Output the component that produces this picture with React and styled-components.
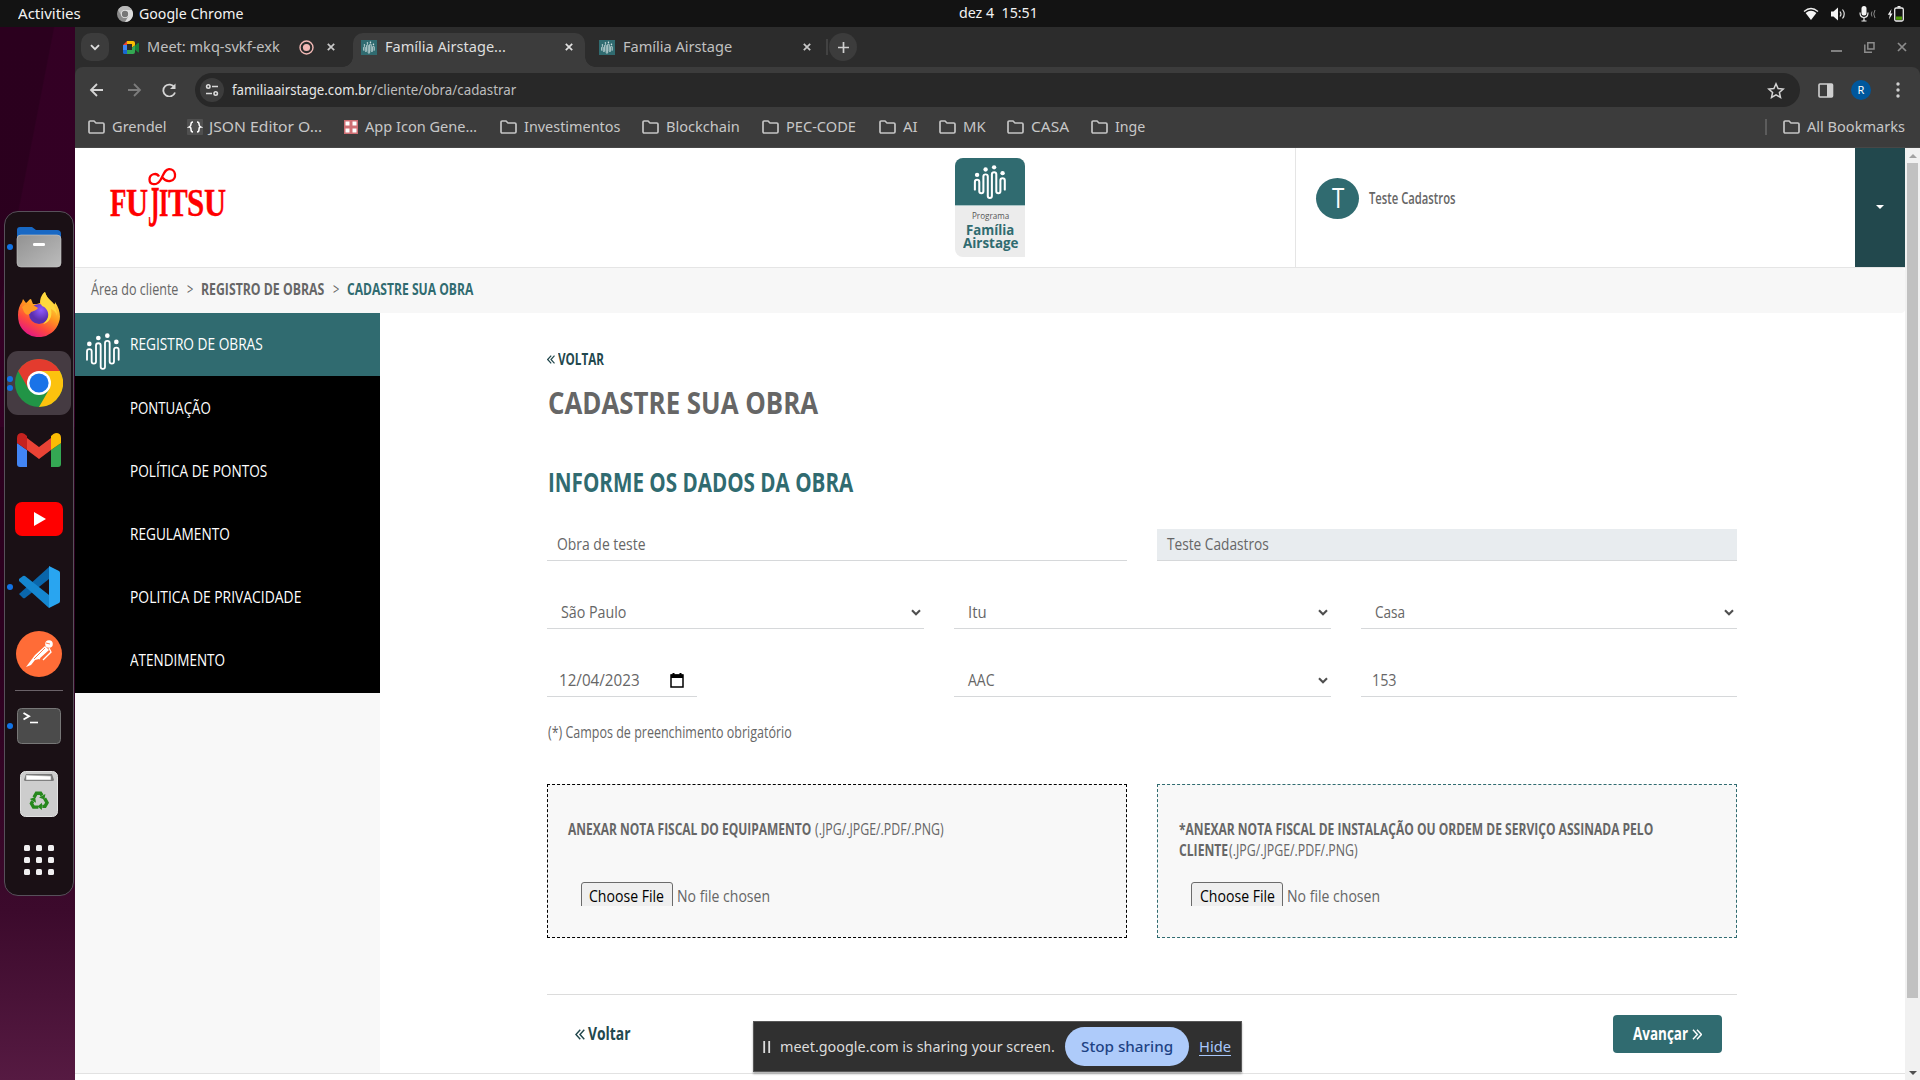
import React, { useLayoutEffect, useRef, useState } from "react";
import styled, { createGlobalStyle } from "styled-components";

const TEAL = "#306b70";
const DARK_TEAL = "#22484d";
const GREY = "#666";

const Global = createGlobalStyle`
  * { box-sizing: border-box; }
  body { margin: 0; background: #131313; overflow: hidden; }
  svg { display: block; flex: none; }
`;

/* ---------- text that condenses to a set width ---------- */
const FitBox = styled.span`
  display: inline-flex;
  flex: none;
  width: ${(p) => p.$w}px;
  margin-left: ${(p) => p.$ml || 0}px;
  white-space: pre;
  font-size: ${(p) => (p.$size ? p.$size + "px" : "inherit")};
  font-weight: ${(p) => p.$weight || "inherit"};
  color: ${(p) => p.$color || "inherit"};
`;
const FitInner = styled.span`
  display: inline-block;
  flex: none;
  transform-origin: 0 50%;
`;
function Fit({ w, ml, size, weight, color, dy = -1, children }) {
  const ref = useRef(null);
  const [s, setS] = useState(1);
  useLayoutEffect(() => {
    const natural = ref.current.offsetWidth;
    if (natural) setS((w + 0.4) / natural);
  }, [w]);
  return (
    <FitBox $w={w} $ml={ml} $size={size} $weight={weight} $color={color}>
      <FitInner ref={ref} style={{ transform: `translateY(${dy}px) scaleX(${s})` }}>{children}</FitInner>
    </FitBox>
  );
}

/* ---------- desktop ---------- */
const Screen = styled.div`
  width: 1920px;
  height: 1080px;
  display: flex;
  flex-direction: column;
  overflow: hidden;
  font-family: "Noto Sans", "Open Sans", sans-serif;
`;
const TopBar = styled.div`
  height: 27px;
  flex: none;
  display: grid;
  grid-template-columns: 959px 1fr auto;
  align-items: center;
  background: #131313;
  color: #f2f2f2;
  font-size: 14.5px;
  line-height: 27px;
`;
const BarGroup = styled.div`
  display: flex;
  align-items: center;
  height: 27px;
  padding-left: ${(p) => p.$pl || 0}px;
  padding-right: ${(p) => p.$pr || 0}px;
  gap: ${(p) => p.$gap || 0}px;
`;
const Desk = styled.div`
  display: flex;
  flex: 1;
  min-height: 0;
`;
const Launcher = styled.div`
  width: 75px;
  flex: none;
  padding: 184px 0 0 4px;
  background: linear-gradient(101deg, transparent 35%, rgba(70, 0, 50, 0.3) 36%) 0 0 / 75px 400px no-repeat,
    linear-gradient(180deg, #2b001e 0%, #2c001f 60%, #3c0a2c 84%, #561a42 100%);
`;
const Dock = styled.div`
  width: 70px;
  height: 685px;
  border: 1px solid #57505a;
  border-radius: 14px;
  background: #1a1015;
  display: flex;
  flex-direction: column;
  align-items: center;
  padding-top: 1px;
`;
const DockItem = styled.div`
  width: 64px;
  height: 64px;
  margin-top: ${(p) => p.$mt ?? 4}px;
  flex: none;
  display: grid;
  grid-template-columns: 6px 52px 6px;
  align-items: center;
  justify-items: center;
  border-radius: 11px;
  background: ${(p) => (p.$on ? "#453b42" : "transparent")};
`;
const Dots = styled.div`
  display: flex;
  flex-direction: column;
  gap: 3px;
`;
const Dot = styled.i`
  width: 6px;
  height: 6px;
  border-radius: 50%;
  background: #1173e6;
`;
const DockRule = styled.div`
  width: 48px;
  height: 1px;
  flex: none;
  background: #6a6268;
  margin-top: 4px;
`;

/* ---------- browser ---------- */
const Browser = styled.div`
  flex: 1;
  min-width: 0;
  display: flex;
  flex-direction: column;
  background: #2c2c2c;
  color: #c7c7c7;
  font-size: 14.5px;
`;
const TabStrip = styled.div`
  height: 40px;
  flex: none;
  display: flex;
  align-items: flex-start;
  padding: 6px 13px 0 6px;
  line-height: 28px;
`;
const RoundButton = styled.div`
  width: 28px;
  height: 28px;
  border-radius: ${(p) => p.$r}px;
  background: #3c3c3c;
  display: flex;
  align-items: center;
  justify-content: center;
`;
const Tab = styled.div`
  width: ${(p) => p.$w}px;
  height: ${(p) => (p.$on ? 34 : 28)}px;
  padding: 0 ${(p) => p.$pr}px ${(p) => (p.$on ? 6 : 0)}px ${(p) => p.$pl}px;
  display: flex;
  align-items: center;
  gap: 8px;
  border-radius: 10px 10px 0 0;
  background: ${(p) => (p.$on ? "#3c3c3c" : "transparent")};
  color: ${(p) => (p.$on ? "#dedede" : "#c0c0c0")};
`;
const TabFoot = styled.div`
  align-self: flex-end;
  width: 10px;
  height: 10px;
  background: radial-gradient(circle at ${(p) => p.$at} 0, #2c2c2c 9.5px, #3c3c3c 10px);
`;
const Spacer = styled.div`
  flex: ${(p) => (p.$w ? "none" : 1)};
  width: ${(p) => (p.$w ? p.$w + "px" : "auto")};
`;
const TabDivider = styled.div`
  width: 2px;
  height: 16px;
  margin: 6px 1px 0 0;
  background: #424242;
`;
const WinControls = styled.div`
  display: flex;
  align-items: center;
  height: 28px;
  gap: 22px;
`;
const Toolbar = styled.div`
  height: 40px;
  flex: none;
  display: flex;
  align-items: center;
  padding: 6px 12px 0 14px;
  border-radius: 8px 8px 0 0;
  background: #3c3c3c;
`;
const NavButtons = styled.div`
  display: flex;
  width: 106px;
  gap: 20.5px;
`;
const Omnibox = styled.div`
  height: 34px;
  width: 1605px;
  border-radius: 17px;
  background: #282828;
  display: flex;
  align-items: center;
  padding: 0 15px 0 5px;
  color: #e6e6e6;
`;
const ToolIcons = styled.div`
  flex: 1;
  display: flex;
  align-items: center;
  padding-left: 18px;
  justify-content: space-between;
`;
const Profile = styled.div`
  width: 20px;
  height: 20px;
  border-radius: 50%;
  background: #00579c;
  color: #fff;
  font-size: 11px;
  line-height: 20px;
  text-align: center;
`;
const Bookmarks = styled.div`
  height: 41px;
  flex: none;
  display: flex;
  align-items: center;
  padding: 0 15px 0 13px;
  background: #3c3c3c;
  border-bottom: 1px solid #474747;
`;
const Bookmark = styled.div`
  display: flex;
  align-items: center;
  gap: ${(p) => p.$gap ?? 7}px;
  margin-right: ${(p) => p.$mr ?? 21}px;
`;
const BookmarkRule = styled.div`
  width: 2px;
  height: 16px;
  background: #5c5c5c;
  margin-right: 16px;
`;

/* ---------- page ---------- */
const Viewport = styled.div`
  flex: 1;
  min-height: 0;
  display: flex;
  background: #fff;
  color: ${GREY};
  font-family: "Open Sans", "Noto Sans", sans-serif;
`;
const Page = styled.div`
  width: 1830px;
  display: flex;
  flex-direction: column;
`;
const Scrollbar = styled.div`
  width: 15px;
  height: 932px;
  background: #f1f1f1;
  display: flex;
  flex-direction: column;
  align-items: center;
  justify-content: space-between;
  padding: 6px 0 5px;
`;
const Thumb = styled.div`
  width: 11px;
  height: 835px;
  margin: 5px 0 auto;
  background: #c1c1c1;
`;
const Header = styled.header`
  height: 120px;
  flex: none;
  display: grid;
  grid-template-columns: 880px 340px 1fr 50px;
  border-bottom: 1px solid #e5e5e5;
`;
const Brand = styled.div`
  padding: 17px 0 0 33px;
`;
const Program = styled.div`
  width: 70px;
  height: 99px;
  margin-top: 10px;
  border-radius: 8px 8px 0 8px;
  overflow: hidden;
  background: #ececec;
  display: flex;
  flex-direction: column;
  align-items: center;
  color: ${TEAL};
`;
const ProgramTop = styled.div`
  width: 70px;
  height: 48px;
  padding: 6px 0 0 18px;
  background: ${TEAL};
  border-bottom: 1px solid #a9c4c6;
  margin-bottom: 4px;
`;
const ProgramLine = styled.div`
  height: ${(p) => p.$h}px;
  line-height: ${(p) => p.$h}px;
  display: flex;
`;
const User = styled.div`
  border-left: 1px solid #e5e5e5;
  display: flex;
  align-items: flex-start;
  gap: 10px;
  padding: 30px 0 0 20px;
`;
const UserBadge = styled.div`
  width: 43px;
  height: 41px;
  border-radius: 50%;
  background: ${TEAL};
  color: #fff;
  display: flex;
  align-items: center;
  justify-content: center;
  line-height: 40px;
`;
const UserName = styled.div`
  height: 41px;
  display: flex;
  align-items: center;
`;
const UserMenu = styled.div`
  background: ${DARK_TEAL};
  display: flex;
  align-items: center;
  justify-content: center;
  padding-bottom: 1px;
`;
const Crumbs = styled.nav`
  height: 45px;
  flex: none;
  display: flex;
  align-items: center;
  gap: 8.5px;
  padding: 0 0 1px 16px;
  border-radius: 4px;
  background: #f7f7f7;
  font-size: 15.5px;
`;
const Columns = styled.div`
  height: 761px;
  flex: none;
  display: flex;
  border-bottom: 1px solid #e2e2e2;
`;
const Sidebar = styled.aside`
  width: 305px;
  background: #f8f8f8;
`;
const Menu = styled.div`
  height: 380px;
  background: #000;
`;
const MenuItem = styled.div`
  height: 63px;
  display: flex;
  align-items: center;
  padding-left: ${(p) => (p.$on ? 10 : 55)}px;
  color: #fff;
  font-size: 17px;
  background: ${(p) => (p.$on ? TEAL : "#000")};
`;
const MenuIcon = styled.span`
  width: 45px;
  padding-top: 14px;
`;
const Main = styled.main`
  width: 1357px;
  padding: 35px 0 0 167px;
`;
const Line = styled.div`
  height: ${(p) => p.$h}px;
  margin-top: ${(p) => p.$mt || 0}px;
  display: flex;
  align-items: center;
  gap: ${(p) => p.$gap || 0}px;
  line-height: ${(p) => p.$h}px;
  color: ${(p) => p.$color || GREY};
`;
const Row = styled.div`
  display: grid;
  grid-template-columns: ${(p) => p.$cols};
  gap: 30px;
  margin-top: ${(p) => p.$mt}px;
`;
const Field = styled.div`
  height: 32px;
  width: ${(p) => (p.$w ? p.$w + "px" : "auto")};
  display: flex;
  align-items: center;
  justify-content: space-between;
  padding: 0 ${(p) => p.$pr || 3}px 1px ${(p) => p.$pl}px;
  border-bottom: 1px solid #d6d8da;
  background: ${(p) => (p.$off ? "#e8ecef" : "#fff")};
  font-size: 17px;
`;
const Upload = styled.div`
  height: 154px;
  border: 1px dashed ${(p) => p.$edge};
  background: #f8f8f8;
  padding: 35px 0 0 ${(p) => p.$pl}px;
`;
const UploadTitle = styled.div`
  height: 62px;
  font-size: 15.5px;
  line-height: 21px;
`;
const TitleLine = styled.div`
  display: flex;
  height: 21px;
`;
const FilePick = styled.div`
  height: 24px;
  overflow: hidden;
  display: flex;
  gap: 4px;
  padding-left: 12.5px;
  font-size: 17px;
  line-height: 27px;
`;
const FileButton = styled.div`
  width: 92px;
  height: 32px;
  padding-left: 7.5px;
  border: 1px solid #6b6b6b;
  border-radius: 3px;
  background: #efefef;
  color: #000;
  line-height: 26px;
`;
const Footer = styled.div`
  margin-top: 56px;
  border-top: 1px solid #dcdcdc;
  height: 80px;
  display: flex;
  justify-content: space-between;
  align-items: flex-start;
  padding: 20px 15px 0 28px;
`;
const BackLink = styled.div`
  height: 38px;
  display: flex;
  align-items: center;
  gap: 3px;
  color: ${DARK_TEAL};
`;
const Next = styled.div`
  width: 109px;
  height: 38px;
  border-radius: 4px;
  background: ${TEAL};
  color: #fff;
  display: flex;
  align-items: center;
  gap: 4px;
  padding-left: 20px;
`;

/* ---------- screen share notice ---------- */
const ShareBar = styled.div`
  position: absolute;
  left: 753px;
  top: 1021px;
  width: 489px;
  height: 51px;
  display: flex;
  align-items: center;
  padding-left: 9px;
  background: #303030;
  border: 1px solid #585858;
  box-shadow: 0 2px 2px rgba(0, 0, 0, 0.3);
  color: #dcdcdc;
  font-size: 14.5px;
`;
const StopButton = styled.div`
  width: 124px;
  height: 39px;
  margin: 0 10px;
  border-radius: 20px;
  background: #aecbfa;
  color: #1d4284;
  display: flex;
  align-items: center;
  justify-content: center;
`;
const Hide = styled.span`
  color: #a8c7fa;
  border-bottom: 1.5px solid #a8c7fa;
  line-height: 17px;
  display: flex;
`;

/* ---------- drawings ---------- */
const Wave = ({ w, h, sw = 5.5, c = "#fff" }) => (
  <svg width={w} height={h} viewBox="0 0 108 118" preserveAspectRatio="none">
    <g fill={c}>
      <circle cx="13" cy="36" r="7" /><circle cx="40" cy="18" r="7" />
      <circle cx="67" cy="11" r="7" /><circle cx="94" cy="30" r="7" />
    </g>
    <path fill="none" stroke={c} strokeWidth={sw} strokeLinecap="round"
      d="M6 84V59a7 7 0 0 1 14 0V89a6.5 6.5 0 0 0 13 0V41a7 7 0 0 1 14 0V105a6.5 6.5 0 0 0 13 0V34a7 7 0 0 1 14 0V89a6.5 6.5 0 0 0 13 0V54a7 7 0 0 1 14 0V84" />
  </svg>
);
const FaviconTile = styled.span`
  width: 16px;
  height: 15px;
  flex: none;
  display: flex;
  align-items: center;
  justify-content: center;
  background: ${TEAL};
`;
const Favicon = () => <FaviconTile><Wave w={12} h={13} sw={7} c="#e4eeee" /></FaviconTile>;
const Cross = ({ s = 8, c = "#c8c8c8", sw = 1.7 }) => (
  <svg width={s} height={s} viewBox="0 0 8 8"><path d="M.8.8l6.4 6.4M7.2.8L.8 7.2" stroke={c} strokeWidth={sw} /></svg>
);
const Folder = () => (
  <svg width="17" height="14" viewBox="0 0 17 14">
    <path d="M1 2.2Q1 1 2.2 1H6l2 2h6.8Q16 3 16 4.2v7.6q0 1.2-1.2 1.2H2.2Q1 13 1 11.8z" fill="none" stroke="#c4c4c4" strokeWidth="1.7" />
  </svg>
);
const Chevrons = ({ right, s = 8 }) => (
  <svg width={s} height={s + 1} viewBox="0 0 8 9">
    <path d={right ? "M.7.7l3.6 3.8L.7 8.3M4 .7l3.6 3.8L4 8.3" : "M4.200 .7L.7 4.5 4.200 8.3M7.500.7L4 4.5l3.5 3.8"} fill="none" stroke="currentColor" strokeWidth="1.2" />
  </svg>
);
const SelectArrow = () => (
  <svg width="10" height="7" viewBox="0 0 10 7"><path d="M1 1.2l4 4 4-4" fill="none" stroke="#4f4f4f" strokeWidth="2.1" /></svg>
);
const Calendar = () => (
  <svg width="14" height="15" viewBox="0 0 14 15">
    <path d="M1 2h12v12H1z" fill="none" stroke="#000" strokeWidth="1.5" /><path d="M1 1.5h12V5H1zM2.5 0h2v2h-2zM9.5 0h2v2h-2z" />
  </svg>
);
const LogoBox = styled.div`
  display: grid;
  justify-items: start;
  width: 122px;
`;
const LogoWord = styled.div`
  height: 34px;
  display: flex;
  padding-left: 2px;
  color: #f00;
  font-family: "Liberation Serif", "Times New Roman", serif;
  font-size: 41px;
  font-weight: 700;
  line-height: 34px;
  -webkit-text-stroke: 0.4px #f00;
`;
const Fujitsu = () => (
  <LogoBox>
    <svg width="122" height="21" viewBox="108 165 122 21">
      <path d="M159 176.500c-2.500-4.500-9.500-2.500-9.500 3 0 6 7.500 6.300 11 .5s4-10.500 8.500-10.800c7-.4 8.500 10 1.500 11.700-3.500.8-6.500-1.300-8.500-3.600" fill="none" stroke="#f00" strokeWidth="2.300" />
    </svg>
    <LogoWord>
      <Fit w={16} dy={-1}>F</Fit>
      <Fit w={22} dy={-1}>U</Fit>
      <Fit w={11} size={56} dy={3.500}>J</Fit>
      <Fit w={9} dy={-1}>I</Fit>
      <Fit w={19} dy={-1}>T</Fit>
      <Fit w={17} dy={-1}>S</Fit>
      <Fit w={22} dy={-1}>U</Fit>
    </LogoWord>
  </LogoBox>
);
const Chrome = ({ s, grey }) => {
  const [r, g, y, b] = grey ? ["#b8b8b8", "#8a8a8a", "#dcdcdc", "#777"] : ["#e33b2e", "#219446", "#fcc20e", "#1a73e8"];
  return (
    <svg width={s} height={s} viewBox="0 0 48 48">
      <circle cx="24" cy="24" r="24" fill={g} />
      <path d="M24 12h20.800A24 24 0 0 1 24 48L34.400 30z" fill={y} />
      <path d="M3.200 12A24 24 0 0 1 44.800 12H24L13.600 30z" fill={r} />
      <circle cx="24" cy="24" r="12" fill={grey ? "#e8e8e8" : "#fff"} />
      <circle cx="24" cy="24" r="9.600" fill={b} />
    </svg>
  );
};
const FilesIcon = () => (
  <svg width="46" height="42" viewBox="0 0 46 42">
    <path d="M1 8V4q0-3 3-3h12l4 3h21q4 0 4 4v6H1z" fill="#1868c4" />
    <defs><linearGradient id="fg" x2="1" y2="1"><stop stopColor="#929292" /><stop offset="1" stopColor="#bcbcbc" /></linearGradient></defs>
    <rect x="1" y="9" width="44" height="32" rx="4" fill="url(#fg)" stroke="#c8c8c8" strokeWidth=".6" />
    <rect x="17" y="17" width="12" height="3" rx="1.300" fill="#fff" />
  </svg>
);
const FirefoxIcon = () => (
  <svg width="44" height="46" viewBox="0 0 44 46">
    <defs>
      <linearGradient id="ff" x1=".8" y1=".1" x2=".3" y2="1"><stop stopColor="#ffe94a" /><stop offset=".4" stopColor="#ff9a1f" /><stop offset=".7" stopColor="#ff4a3c" /><stop offset="1" stopColor="#e31587" /></linearGradient>
      <radialGradient id="fp" cx=".6" cy=".3"><stop stopColor="#9059ff" /><stop offset="1" stopColor="#5b2fae" /></radialGradient>
    </defs>
    <path d="M28 1c1 6 6 8 9 12 1 1 1-1 1-2 5 7 6 15 4 20a21 21 0 0 1-40 1C0 24 1 16 5 11l1-3 3 4c2-1 3-4 5-4l2 5c3 0 5 0 7-1 0-5 2-9 5-11z" fill="url(#ff)" />
    <circle cx="22" cy="23" r="10" fill="url(#fp)" />
    <path d="M5 16c5-5 11-2 16 1-2 3-5 3-7 4-2 4-5 3-7 0z" fill="#ff9a25" />
    <path d="M28 1c2 8 12 12 12 24-1-4-3-6-6-7 2 9-3 14-8 15 9-7 5-16-1-18-3-4 0-11 3-14z" fill="#ffd83d" />
  </svg>
);
const GmailIcon = () => (
  <svg width="44" height="34" viewBox="0 0 44 34">
    <path d="M0 10l10 7v17H3q-3 0-3-3z" fill="#4285f4" /><path d="M44 10l-10 7v17h7q3 0 3-3z" fill="#34a853" />
    <path d="M10 5l12 9 12-9v12L22 26 10 17z" fill="#ea4335" />
    <path d="M0 11V5Q0 0 5 0q2 0 5 3v14L0 10z" fill="#c5221f" /><path d="M44 11V5q0-5-5-5-2 0-5 3v14l10-7z" fill="#fbbc04" />
  </svg>
);
const YoutubeIcon = () => (
  <svg width="48" height="34" viewBox="0 0 48 34"><rect width="48" height="34" rx="7" fill="#f00" /><path d="M19 10l12 7-12 7z" fill="#fff" /></svg>
);
const CodeIcon = () => (
  <svg width="42" height="42" viewBox="0 0 42 42">
    <path d="M1 28l4 4q1 .6 2 0L31 13V1L1 28z" fill="#0a66ab" /><path d="M1 13l4-3q1-.6 2 0l24 19v13L1 15z" fill="#1587d0" />
    <path d="M31 0l10 5q1 .5 1 2v28q0 1.500-1 2l-10 5z" fill="#29a5f0" />
  </svg>
);
const PostmanIcon = () => (
  <svg width="46" height="46" viewBox="0 0 46 46">
    <circle cx="23" cy="23" r="23" fill="#ff6c37" />
    <circle cx="33" cy="13" r="3.800" fill="#fff" />
    <path d="M29 15l4 4-10 9-4 1-4 5-5 2 6-8 3-4z" fill="#fff" />
    <path d="M33 17l2 4-8 8M20 26l4 2" stroke="#fff" strokeWidth="1.300" fill="none" />
    <path d="M29 17L18 28M30 12l4 1" stroke="#ff6c37" strokeWidth=".9" />
  </svg>
);
const TerminalIcon = () => (
  <svg width="44" height="36" viewBox="0 0 44 36">
    <rect x=".5" y=".5" width="43" height="35" rx="4" fill="#4b4b4b" stroke="#777" />
    <path d="M6.500 5l5.500 3.300L6.500 11.500" fill="none" stroke="#fff" strokeWidth="1.900" /><path d="M13 14.500h8" stroke="#fff" strokeWidth="1.600" />
  </svg>
);
const TrashIcon = () => (
  <svg width="38" height="46" viewBox="0 0 38 46">
    <rect x=".5" y=".5" width="37" height="45" rx="5" fill="#cdcdcd" stroke="#e2e2e2" />
    <path d="M4 9l2-6h26l2 6q0 1-2 1H6q-2 0-2-1z" fill="#777" /><path d="M6 9V4l25 1v4z" fill="#fff" stroke="#999" strokeWidth=".6" />
    <g transform="translate(19 30)">
      {[0, 120, 240].map((a) => (
        <g key={a} transform={`rotate(${a})`}>
          <path d="M-5-3.600L-2.600-7.800H1.600L3-5.500" fill="none" stroke="#26881c" strokeWidth="3.400" />
          <path d="M6.400-7L5.400-1.400 0-3.500z" fill="#26881c" />
        </g>
      ))}
    </g>
  </svg>
);
const GridIcon = () => (
  <svg width="30" height="30" viewBox="0 0 30 30" fill="#f0eff0">
    {[0, 12, 24].map((y) => [0, 12, 24].map((x) => <rect key={x + "-" + y} x={x} y={y} width="6" height="6" rx="1.500" />))}
  </svg>
);

const bookmarks = [
  ["Grendel", 54, 21], ["json"], ["app"], ["Investimentos", 96, 22], ["Blockchain", 73, 23], ["PEC-CODE", 70, 23],
  ["AI", 14, 22], ["MK", 22, 22], ["CASA", 38, 22], ["Inge", 30, 0],
];
const menu = [["PONTUAÇÃO", 80], ["POLÍTICA DE PONTOS", 136.5], ["REGULAMENTO", 99], ["POLITICA DE PRIVACIDADE", 171], ["ATENDIMENTO", 95]];

const Item = ({ on, dots = 0, mt, children }) => (
  <DockItem $on={on} $mt={mt}>
    <Dots>{Array.from({ length: dots }, (_, i) => <Dot key={i} />)}</Dots>
    {children}
  </DockItem>
);

function FileChooser() {
  return (
    <FilePick>
      <FileButton><Fit w={75} dy={0}>Choose File</Fit></FileButton>
      <Fit w={93} dy={0}>No file chosen</Fit>
    </FilePick>
  );
}

export default function App() {
  return (
    <Screen>
      <Global />
      <TopBar>
        <BarGroup $pl={18}>
          <Fit w={62} dy={0}>Activities</Fit>
          <Spacer $w={37} />
          <Chrome s={16} grey />
          <Fit w={104} ml={6} dy={0}>Google Chrome</Fit>
        </BarGroup>
        <BarGroup><Fit w={78}>{"dez 4  15:51"}</Fit></BarGroup>
        <BarGroup $pr={16} $gap={11.5}>
          <svg width="16" height="14" viewBox="0 0 16 14"><path d="M1 4.500Q8-1.500 15 4.500" fill="none" stroke="#eee" strokeWidth="1.300" /><path d="M2.600 6Q8 1.500 13.400 6L8 13z" fill="#f4f4f4" /></svg>
          <svg width="17" height="14" viewBox="0 0 17 14"><path d="M1 4.500h2.500L8 .5v13L3.500 9.500H1z" fill="#f4f4f4" /><path d="M10 4.500q2 2.500 0 5M12.500 2.500q3.500 4.500 0 9" fill="none" stroke="#ddd" strokeWidth="1.200" /></svg>
          <svg width="17" height="16" viewBox="0 0 17 16"><rect x="2.500" y="0" width="5" height="9.500" rx="2.500" fill="#f4f4f4" /><path d="M1 6.500q0 5 4 5t4-5M5 11.500V15M2.500 15h5" fill="none" stroke="#eee" strokeWidth="1.200" /><path d="M13 5.500q-1.500 2.500 0 5M16 4q-2.500 4 0 8" fill="none" stroke="#888" /></svg>
          <svg width="17" height="16" viewBox="0 0 17 16"><path d="M4.500 3L.8 8.800h2L2 13.500 5.500 7.500h-2z" fill="#f4f4f4" /><path d="M10.500.800h3" stroke="#eee" strokeWidth="1.600" /><rect x="7.700" y="2" width="8.600" height="13" rx="1.500" fill="none" stroke="#eee" strokeWidth="1.300" /><path d="M9 10.500h6v3.300H9z" fill="#4e9a06" /></svg>
        </BarGroup>
      </TopBar>
      <Desk>
        <Launcher>
          <Dock>
            <Item dots={1} mt={2}><FilesIcon /></Item>
            <Item mt={3}><FirefoxIcon /></Item>
            <Item on dots={2} mt={5}><Chrome s={48} /></Item>
            <Item mt={3}><GmailIcon /></Item>
            <Item mt={5}><YoutubeIcon /></Item>
            <Item dots={1}><CodeIcon /></Item>
            <Item mt={3}><PostmanIcon /></Item>
            <DockRule />
            <Item dots={1} mt={3}><TerminalIcon /></Item>
            <Item><TrashIcon /></Item>
            <Item mt={2}><GridIcon /></Item>
          </Dock>
        </Launcher>
        <Browser>
          <TabStrip>
            <RoundButton $r={10}><svg width="10" height="7" viewBox="0 0 10 7"><path d="M1 1.200l4 4 4-4" fill="none" stroke="#ddd" strokeWidth="1.900" /></svg></RoundButton>
            <Tab $w={234} $pl={14} $pr={8}>
              <svg width="16" height="13" viewBox="0 0 16 13">
                <path d="M4 0h6q2 0 2 2v2.500L9 6.500V3H4z" fill="#fbbc04" /><path d="M4 0v4H0z" fill="#ea4335" /><path d="M0 4h4v5H0z" fill="#4285f4" /><path d="M0 9h4v4H1.500Q0 13 0 11.500z" fill="#1967d2" /><path d="M4 9h5V6.500l3-2v6.500q0 2-2 2H4z" fill="#34a853" /><path d="M12 4.500l3-2.500q1-.6 1 .7v8q0 1.300-1 .6l-3-2.500z" fill="#188038" />
              </svg>
              <Fit w={132}>Meet: mkq-svkf-exk</Fit>
              <Spacer />
              <BarGroup $gap={13}>
                <svg width="15" height="15" viewBox="0 0 15 15"><circle cx="7.500" cy="7.500" r="6.500" fill="none" stroke="#f2b8b5" strokeWidth="1.400" /><circle cx="7.500" cy="7.500" r="3.600" fill="#f2b8b5" /></svg>
                <Cross />
              </BarGroup>
            </Tab>
            <TabFoot $at="0" />
            <Tab $on $w={232} $pl={8} $pr={12}>
              <Favicon />
              <Fit w={120}>Família Airstage...</Fit>
              <Spacer />
              <Cross c="#e0e0e0" />
            </Tab>
            <TabFoot $at="100%" />
            <Tab $w={231} $pl={4} $pr={15}>
              <Favicon />
              <Fit w={109}>Família Airstage</Fit>
              <Spacer />
              <Cross />
            </Tab>
            <TabDivider />
            <RoundButton $r={14}><svg width="11" height="11" viewBox="0 0 11 11"><path d="M5.500 0v11M0 5.500h11" stroke="#d0d0d0" strokeWidth="1.700" /></svg></RoundButton>
            <Spacer />
            <WinControls>
              <svg width="11" height="10" viewBox="0 0 11 10"><path d="M0 9h11" stroke="#8c8c8c" strokeWidth="1.800" /></svg>
              <svg width="11" height="11" viewBox="0 0 11 11"><path d="M3.800.800h6.200v6.200H3.800zM.8 2.500V10.200H8" fill="none" stroke="#8c8c8c" strokeWidth="1.500" /></svg>
              <Cross s={10} c="#8c8c8c" sw={1.400} />
            </WinControls>
          </TabStrip>
          <Toolbar>
            <NavButtons>
              <svg width="16" height="14" viewBox="0 0 16 14"><path d="M8 1L2 7l6 6M2 7h12" fill="none" stroke="#d4d4d4" strokeWidth="1.800" /></svg>
              <svg width="16" height="14" viewBox="0 0 16 14"><path d="M8 1l6 6-6 6M14 7H2" fill="none" stroke="#7c7c7c" strokeWidth="1.800" /></svg>
              <svg width="15" height="14" viewBox="0 0 15 14"><path d="M13 9.500a6 6 0 1 1-.5-5" fill="none" stroke="#d4d4d4" strokeWidth="1.800" /><path d="M13.500.500v5.500H8z" fill="#d4d4d4" /></svg>
            </NavButtons>
            <Omnibox>
              <svg width="24" height="24" viewBox="0 0 24 24"><circle cx="12" cy="12" r="12" fill="#3c3c3c" /><g fill="none" stroke="#dadada" strokeWidth="1.600"><circle cx="8.300" cy="8.500" r="1.700" /><path d="M12 8.500h6M6 15.500h6" /><circle cx="15.700" cy="15.500" r="1.700" /></g></svg>
              <Fit w={139} ml={8}>familiaairstage.com.br</Fit>
              <Fit w={144} ml={1} color="#bdbdbd">/cliente/obra/cadastrar</Fit>
              <Spacer />
              <svg width="18" height="17" viewBox="0 0 18 17"><path d="M9 1.800l2.100 4.700 5.100.500-3.800 3.400 1.100 5L9 12.800l-4.500 2.600 1.100-5L1.800 7l5.100-.5z" fill="none" stroke="#d4d4d4" strokeWidth="1.500" /></svg>
            </Omnibox>
            <ToolIcons>
              <svg width="16" height="15" viewBox="0 0 16 15"><rect x="1" y="1" width="13.500" height="13" rx="1" fill="none" stroke="#d0d0d0" strokeWidth="1.600" /><path d="M9 1h6v13H9z" fill="#d0d0d0" /></svg>
              <Profile>R</Profile>
              <svg width="20" height="16" viewBox="0 0 20 16" fill="#d0d0d0"><circle cx="10" cy="2" r="1.700" /><circle cx="10" cy="8" r="1.700" /><circle cx="10" cy="14" r="1.700" /></svg>
            </ToolIcons>
          </Toolbar>
          <Bookmarks>
            {bookmarks.map(([name, w, mr]) => {
              if (name === "json")
                return (
                  <Bookmark key={name} $mr={22} $gap={6}>
                    <svg width="16" height="16" viewBox="0 0 16 16"><rect width="16" height="16" rx="1" fill="#505050" /><path d="M6 3Q4 3 4 5t-1.600 3Q4 8 4 10.500T6 13M10 3q2 0 2 2t1.600 3Q12 8 12 10.500T10 13" fill="none" stroke="#fff" strokeWidth="1.500" /></svg>
                    <Fit w={113}>JSON Editor O…</Fit>
                  </Bookmark>
                );
              if (name === "app")
                return (
                  <Bookmark key={name} $mr={23}>
                    <svg width="14" height="14" viewBox="0 0 14 14"><rect width="14" height="14" fill="#cf6f74" /><path d="M1.500 1.500h4v4h-4zM8.500 1.500h4v4h-4zM1.500 8.500h4v4h-4zM8.500 8.500h4v4h-4z" fill="#fff" /></svg>
                    <Fit w={112}>App Icon Gene…</Fit>
                  </Bookmark>
                );
              return <Bookmark key={name} $mr={mr}><Folder /><Fit w={w}>{name}</Fit></Bookmark>;
            })}
            <Spacer />
            <BookmarkRule />
            <Bookmark $mr={0}><Folder /><Fit w={98}>All Bookmarks</Fit></Bookmark>
          </Bookmarks>
          <Viewport>
            <Page>
              <Header>
                <Brand><Fujitsu /></Brand>
                <Program>
                  <ProgramTop><Wave w={34} h={36} sw={6.500} /></ProgramTop>
                  <ProgramLine $h={12}><Fit w={37} size={9.500} color="#555" dy={0}>Programa</Fit></ProgramLine>
                  <ProgramLine $h={14}><Fit w={48} size={15} weight={700} dy={0}>Família</Fit></ProgramLine>
                  <ProgramLine $h={13}><Fit w={55} size={15} weight={700} dy={0}>Airstage</Fit></ProgramLine>
                </Program>
                <User>
                  <UserBadge><Fit w={12} size={27}>T</Fit></UserBadge>
                  <UserName><Fit w={86} size={15.500} weight={600}>Teste Cadastros</Fit></UserName>
                </User>
                <UserMenu><svg width="8" height="4" viewBox="0 0 8 4"><path d="M0 0h8L4 4z" fill="#fff" /></svg></UserMenu>
              </Header>
              <Crumbs>
                <Fit w={87}>Área do cliente</Fit>
                <Fit w={6}>&gt;</Fit>
                <Fit w={123} weight={700}>REGISTRO DE OBRAS</Fit>
                <Fit w={6}>&gt;</Fit>
                <Fit w={126} weight={700} color={TEAL}>CADASTRE SUA OBRA</Fit>
              </Crumbs>
              <Columns>
                <Sidebar>
                  <Menu>
                    <MenuItem $on><MenuIcon><Wave w={36} h={39} /></MenuIcon><Fit w={132.500}>REGISTRO DE OBRAS</Fit></MenuItem>
                    {menu.map(([t, w]) => <MenuItem key={t}><Fit w={w} dy={0}>{t}</Fit></MenuItem>)}
                  </Menu>
                </Sidebar>
                <Main>
                  <Line $h={22} $gap={3} $color={DARK_TEAL}><Chevrons s={8} /><Fit w={45.500} size={15.500} weight={700} dy={0}>VOLTAR</Fit></Line>
                  <Line $h={40} $mt={12} $gap={0}><Fit w={270} ml={0.500} size={31} weight={700} dy={0}>CADASTRE SUA OBRA</Fit></Line>
                  <Line $h={40} $mt={40} $color={TEAL}><Fit w={305} ml={0.500} size={26} weight={700} dy={0}>INFORME OS DADOS DA OBRA</Fit></Line>
                  <Row $cols="580px 580px" $mt={27}>
                    <Field $pl={10}><Fit w={88}>Obra de teste</Fit></Field>
                    <Field $pl={10} $off><Fit w={101}>Teste Cadastros</Fit></Field>
                  </Row>
                  <Row $cols="377px 377px 376px" $mt={36}>
                    <Field $pl={14}><Fit w={65}>São Paulo</Fit><SelectArrow /></Field>
                    <Field $pl={13.500}><Fit w={18}>Itu</Fit><SelectArrow /></Field>
                    <Field $pl={13.500}><Fit w={30}>Casa</Fit><SelectArrow /></Field>
                  </Row>
                  <Row $cols="377px 377px 376px" $mt={36}>
                    <Field $pl={11.500} $pr={13} $w={150}><Fit w={80}>12/04/2023</Fit><Calendar /></Field>
                    <Field $pl={14}><Fit w={26}>AAC</Fit><SelectArrow /></Field>
                    <Field $pl={10.500}><Fit w={24}>153</Fit></Field>
                  </Row>
                  <Line $h={24} $mt={23}><Fit w={243} ml={1} size={15.500} dy={0}>(*) Campos de preenchimento obrigatório</Fit></Line>
                  <Row $cols="580px 580px" $mt={40}>
                    <Upload $edge="#000" $pl={20}>
                      <UploadTitle>
                        <TitleLine><Fit w={243} weight={700}>ANEXAR NOTA FISCAL DO EQUIPAMENTO</Fit><Fit w={128} ml={4}>(.JPG/.JPGE/.PDF/.PNG)</Fit></TitleLine>
                      </UploadTitle>
                      <FileChooser />
                    </Upload>
                    <Upload $edge={TEAL} $pl={20.500}>
                      <UploadTitle>
                        <TitleLine><Fit w={474} weight={700}>*ANEXAR NOTA FISCAL DE INSTALAÇÃO OU ORDEM DE SERVIÇO ASSINADA PELO</Fit></TitleLine>
                        <TitleLine><Fit w={49} weight={700}>CLIENTE</Fit><Fit w={128} ml={1}>(.JPG/.JPGE/.PDF/.PNG)</Fit></TitleLine>
                      </UploadTitle>
                      <FileChooser />
                    </Upload>
                  </Row>
                  <Footer>
                    <BackLink><Chevrons s={10} /><Fit w={42} size={17} weight={700}>Voltar</Fit></BackLink>
                    <Next><Fit w={55} size={17} weight={700}>Avançar</Fit><Chevrons right s={10} /></Next>
                  </Footer>
                </Main>
              </Columns>
            </Page>
            <Scrollbar>
              <svg width="8" height="4" viewBox="0 0 8 4"><path d="M4 0l4 4H0z" fill="#a3a3a3" /></svg>
              <Thumb />
              <svg width="8" height="4" viewBox="0 0 8 4"><path d="M0 0h8L4 4z" fill="#505050" /></svg>
            </Scrollbar>
          </Viewport>
        </Browser>
      </Desk>
      <ShareBar>
        <svg width="8" height="12" viewBox="0 0 8 12"><path d="M1.200 0v12M6.200 0v12" stroke="#dcdcdc" strokeWidth="1.800" /></svg>
        <Fit w={274.500} ml={9}>meet.google.com is sharing your screen.</Fit>
        <StopButton><Fit w={92} size={15} weight={500}>Stop sharing</Fit></StopButton>
        <Hide><Fit w={32} dy={0}>Hide</Fit></Hide>
      </ShareBar>
    </Screen>
  );
}
